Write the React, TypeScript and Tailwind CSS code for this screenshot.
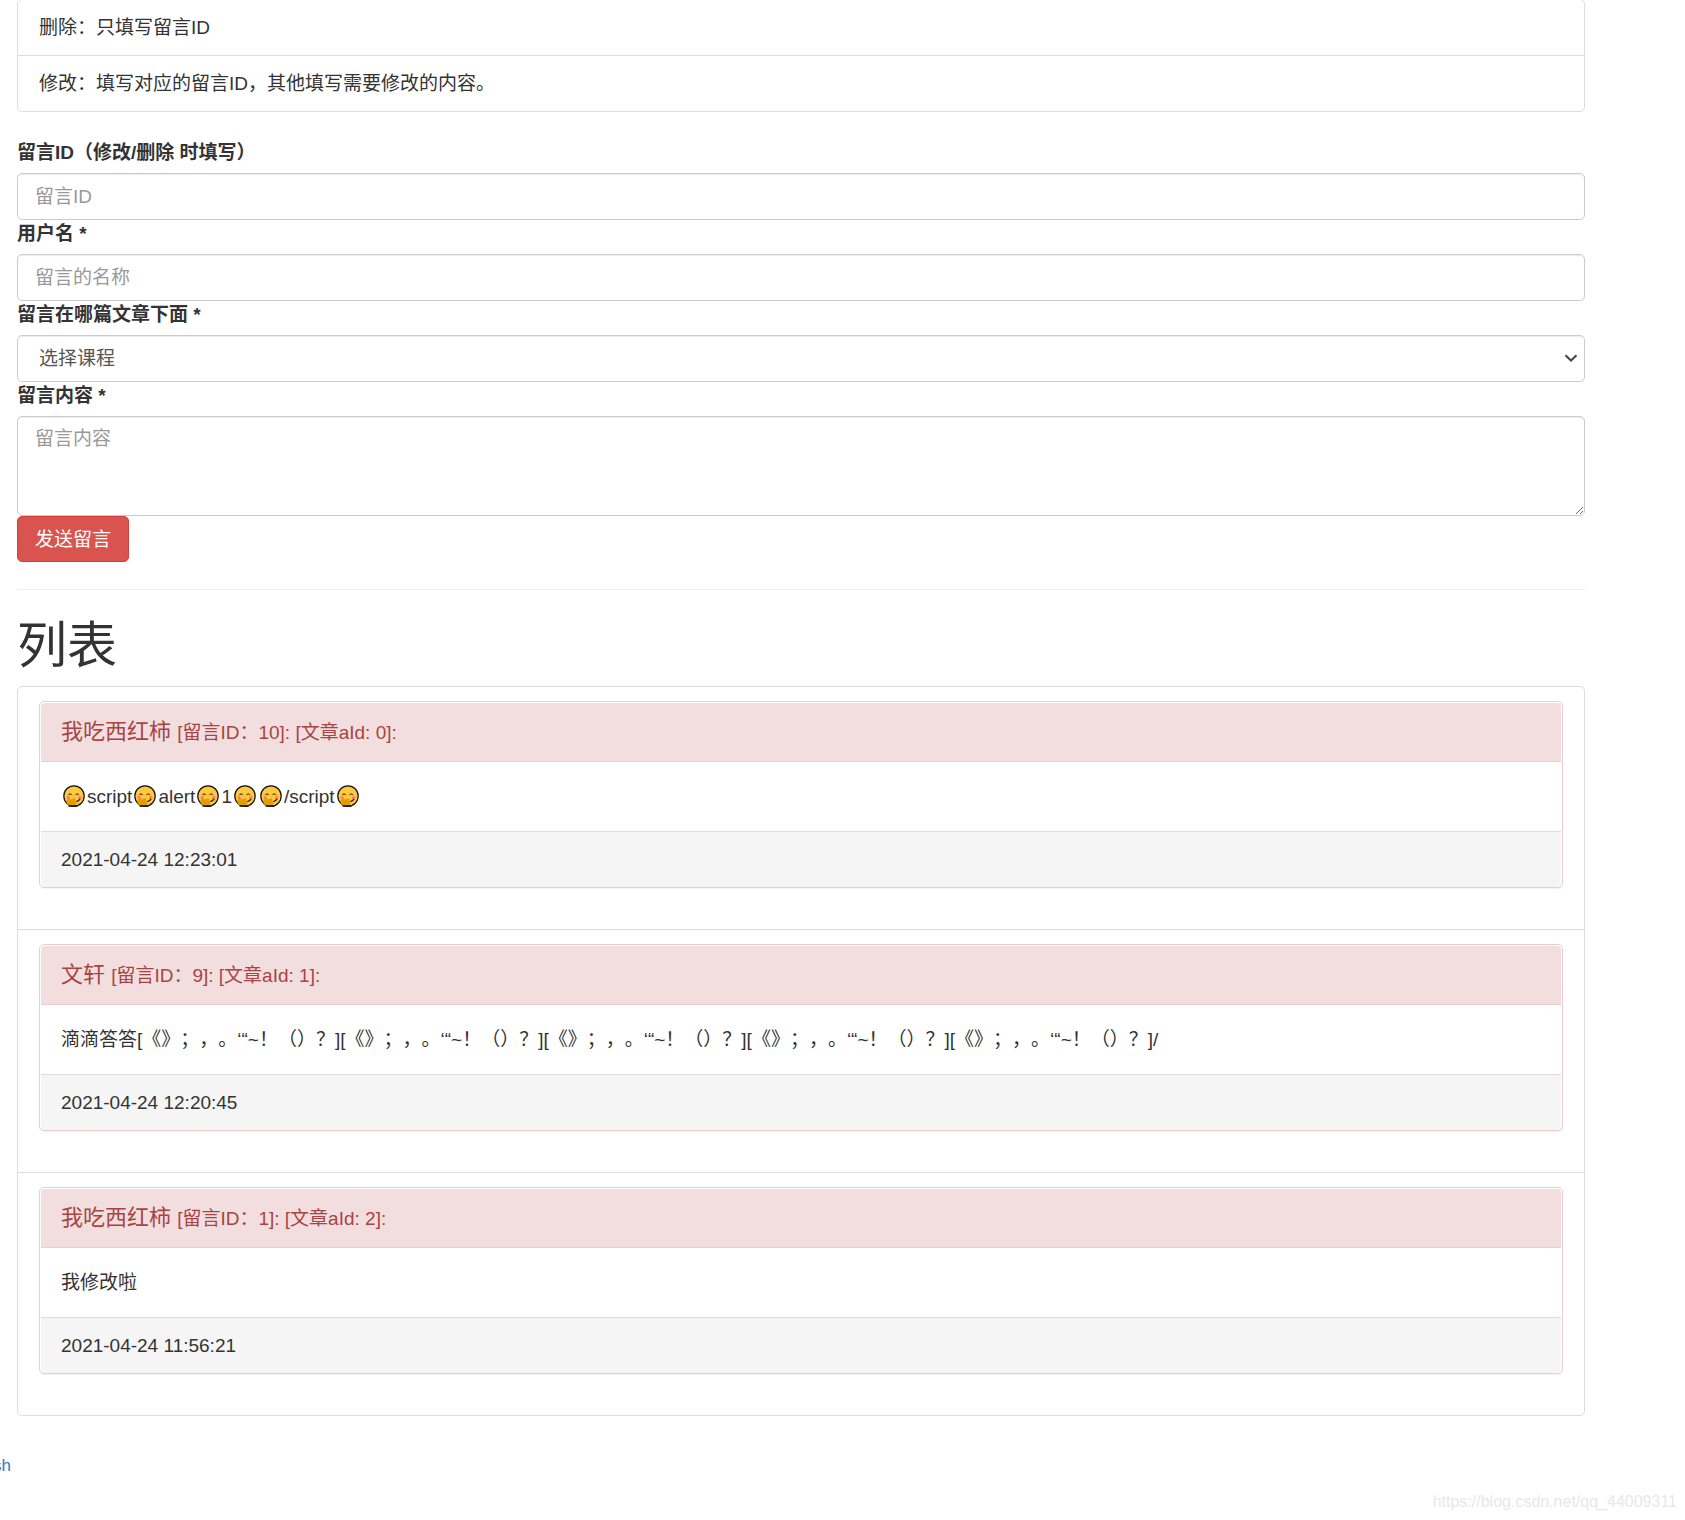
import React from 'react';
import clsx from 'clsx';

interface Message {
  id: number;
  articleId: number;
  user: string;
  content: React.ReactNode;
  createdAt: string;
}

const FaceEmoji: React.FC = () => (
  <svg viewBox="0 0 26 26" className="inline-block size-[26px] align-[-6px]" role="img" aria-label="emoji">
    <circle cx="13" cy="13" r="10.2" fill="#ffc83d" stroke="#111" strokeWidth="1.2" />
    <path d="M6.4 21.6c-1.600-2.600-1.300-5 .6-5.800 1.200-.4 2 .6 3.200.5 1.500-.1 2.400-1.500 3.600-.8 1 .6.3 2 1 3 .9.9 1 2.100.1 3.100-1.300 1.400-5.800 1.600-8.500 0z" fill="#e39d00" />
    <circle cx="7.3" cy="14.8" r="1.8" fill="#ff8257" />
    <circle cx="18.7" cy="14.8" r="1.8" fill="#ff8257" />
    <path d="M7.400 11.800c.6-1.300 2.700-1.300 3.300 0M14.600 11.800c.6-1.300 2.700-1.300 3.300 0" fill="none" stroke="#222" strokeWidth="1" strokeLinecap="round" />
    <path d="M15.800 18.300c1.500-.2 2.500-.9 3-2" fill="none" stroke="#222" strokeWidth="1.300" strokeLinecap="round" />
    <path d="M8 23h8" stroke="#111" strokeWidth="1.400" strokeLinecap="round" />
  </svg>
);

const messages: Message[] = [
  {
    id: 10,
    articleId: 0,
    user: '我吃西红柿',
    content: (
      <>
        <FaceEmoji />script<FaceEmoji />alert<FaceEmoji />1<FaceEmoji /><FaceEmoji />/script<FaceEmoji />
      </>
    ),
    createdAt: '2021-04-24 12:23:01',
  },
  {
    id: 9,
    articleId: 1,
    user: '文轩',
    content: '滴滴答答' + '[《》；，。‘“~！（）？]'.repeat(5) + '/',
    createdAt: '2021-04-24 12:20:45',
  },
  {
    id: 1,
    articleId: 2,
    user: '我吃西红柿',
    content: '我修改啦',
    createdAt: '2021-04-24 11:56:21',
  },
];

const tips = ['删除：只填写留言ID', '修改：填写对应的留言ID，其他填写需要修改的内容。'];

const control =
  'block w-full rounded-[5px] border border-[#ccc] bg-white text-[19px] leading-[27px] text-[#555] placeholder:text-[#999] shadow-[inset_0_1px_1px_rgba(0,0,0,0.075)]';

const FieldLabel: React.FC<{ htmlFor: string; children: React.ReactNode }> = ({ htmlFor, children }) => (
  <label htmlFor={htmlFor} className="mb-[7px] block font-bold">
    {children}
  </label>
);

const MessagePanel: React.FC<{ message: Message }> = ({ message }) => (
  <article className="mb-[27px] rounded-[5px] border border-[#ebccd1] px-px pt-px shadow-[0_1px_1px_rgba(0,0,0,0.05)]">
    <header className="rounded-t-[4px] border-b border-[#ebccd1] bg-[#f2dede] px-5 py-[14px] text-[#a94442]">
      <h3 className="text-[22px] leading-[29px]">
        {message.user}{' '}
        <small className="text-[19px]">
          [留言ID：{message.id}]: [文章aId: {message.articleId}]:
        </small>
      </h3>
    </header>
    <div className="px-5 py-[21px]">{message.content}</div>
    <footer className="rounded-b-[4px] border-t border-[#ddd] bg-[#f5f5f5] px-5 py-[14px]">
      {message.createdAt}
    </footer>
  </article>
);

const App: React.FC = () => {
  return (
    <div
      lang="zh-CN"
      className="bg-white font-['Liberation_Sans','Noto_Sans_CJK_SC',sans-serif] text-[19px] leading-[27px] text-[#333] [text-spacing-trim:space-all]"
    >
      <main className="mr-[100px] ml-[17px]">
        <ul className="-mt-px mb-[27px] rounded-[5px] border border-[#ddd]">
          {tips.map((tip, i) => (
            <li key={tip} className={clsx('px-[21px] py-[14px]', i > 0 && 'border-t border-[#ddd]')}>
              {tip}
            </li>
          ))}
        </ul>

        <form onSubmit={(e) => e.preventDefault()}>
          <FieldLabel htmlFor="mid">留言ID（修改/删除 时填写）</FieldLabel>
          <input id="mid" type="text" placeholder="留言ID" className={clsx(control, 'h-[47px] px-[17px]')} />
          <FieldLabel htmlFor="username">用户名 *</FieldLabel>
          <input id="username" type="text" placeholder="留言的名称" className={clsx(control, 'h-[47px] px-[17px]')} />
          <FieldLabel htmlFor="article">留言在哪篇文章下面 *</FieldLabel>
          <div className="relative">
            <select id="article" className={clsx(control, 'h-[47px] appearance-none pr-8 pl-[21px]')}>
              <option>选择课程</option>
            </select>
            <svg
              viewBox="0 0 14 8"
              className="pointer-events-none absolute top-[19px] right-[7px] h-2 w-[14px]"
              fill="none"
              stroke="#444"
              strokeWidth="2"
            >
              <path d="M1.500 1.200 7 6.500l5.500-5.300" />
            </svg>
          </div>
          <FieldLabel htmlFor="content">留言内容 *</FieldLabel>
          <textarea id="content" placeholder="留言内容" className={clsx(control, 'h-[100px] px-[17px] py-2')} />
          <button
            type="submit"
            className="block h-[46px] rounded-[5px] border border-[#d43f3a] bg-[#d9534f] px-[17px] text-white"
          >
            发送留言
          </button>
        </form>

        <hr className="my-[27px] border-[#eee]" />

        <h1 className="mb-[10px] text-[50px] leading-[59px]">列表</h1>
        <ul className="rounded-[5px] border border-[#ddd]">
          {messages.map((message, i) => (
            <li key={message.id} className={clsx('px-[21px] py-[14px]', i > 0 && 'border-t border-[#ddd]')}>
              <MessagePanel message={message} />
            </li>
          ))}
        </ul>
      </main>

      <div className="mt-9 flex w-[11px] justify-end overflow-hidden text-[17px]">
        <a href="#" className="text-[#337ab7]">
          sh
        </a>
      </div>
      <p className="mt-2 pr-2 text-right text-base leading-[30px] text-[#e8e8e8]">
        https://blog.csdn.net/qq_44009311
      </p>
    </div>
  );
};

export default App;
